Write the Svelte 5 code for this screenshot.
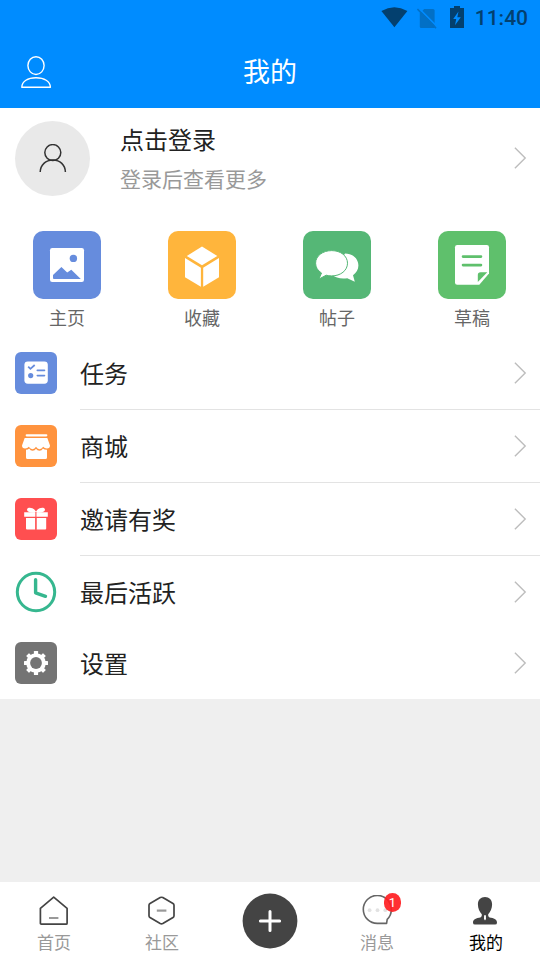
<script lang="ts">
	type Shortcut = { id: string; title: string; color: string };
	type Tab = { id: string; title: string; badge?: number };

	const shortcuts: Shortcut[] = [
		{ id: 'home', title: '主页', color: '#668cdd' },
		{ id: 'favorite', title: '收藏', color: '#ffb53c' },
		{ id: 'posts', title: '帖子', color: '#55b776' },
		{ id: 'draft', title: '草稿', color: '#5fc06c' }
	];

	const rows: Shortcut[] = [
		{ id: 'task', title: '任务', color: '#668cdd' },
		{ id: 'shop', title: '商城', color: '#ff933e' },
		{ id: 'invite', title: '邀请有奖', color: '#ff4f50' },
		{ id: 'active', title: '最后活跃', color: 'transparent' },
		{ id: 'settings', title: '设置', color: '#747474' }
	];

	const tabs: Tab[] = [
		{ id: 'index', title: '首页' },
		{ id: 'forum', title: '社区' },
		{ id: 'add', title: '' },
		{ id: 'message', title: '消息', badge: 1 },
		{ id: 'mine', title: '我的' }
	];

	const teeth = [0, 45, 90, 135, 180, 225, 270, 315];

	let current = $state('mine');
</script>

{#snippet arrow()}
	<svg class="arrow" width="14" height="24" viewBox="0 0 14 24">
		<path d="M1.9 1.8 12.2 12 1.9 22.2" fill="none" stroke="#bdbdbd" stroke-width="1.4" />
	</svg>
{/snippet}

<div class="page">
	<header>
		<div class="status-bar">
			<svg width="27" height="22" viewBox="0 0 27 22">
				<path d="M.4 4.9Q13.4-2.5 26.4 4.9L13.4 21.2Z" fill="#03406f" />
			</svg>
			<svg class="sim" width="20" height="22" viewBox="0 0 20 22">
				<path d="M7.2 1H16q1.6 0 1.6 1.6V20H4.2Q2.8 20 2.8 18.5V5.5Z" fill="#0270c6" />
				<path d="M1.2-.4 20.6 19" stroke="#008cff" stroke-width="1.6" />
				<path d="M.4 1.1 19 20.1" stroke="#0270c6" stroke-width="1.6" />
			</svg>
			<svg class="battery" width="14" height="22" viewBox="0 0 14 22">
				<path d="M0 2h4V0h6v2h4v20H0z" fill="#03406f" />
				<path d="M8.5 5.4 3.2 13.1h3L5 19.2l5.8-8H7.3z" fill="#008cff" />
			</svg>
			<span class="time">11:40</span>
		</div>
		<div class="title-bar">
			<svg width="32" height="33" viewBox="0 0 32 33" fill="none" stroke="#fff" stroke-width="1.4">
				<ellipse cx="16" cy="9.6" rx="8.1" ry="8.9" />
				<path d="M1.8 31.2H30.4C30.2 25.2 24.2 21.8 16 21.8S2 25.2 1.8 31.2Z" stroke-linejoin="round" />
			</svg>
			<h1>我的</h1>
		</div>
	</header>

	<main>
		<section class="profile">
			<div class="avatar">
				<svg width="30" height="30" viewBox="0 0 30 30" fill="none" stroke="#333" stroke-width="1.5">
					<circle cx="14.8" cy="8.6" r="8" />
					<path d="M2.2 28C2.4 21 7.7 16 14.9 16S27.2 21 27.4 28" />
				</svg>
			</div>
			<div class="profile-text">
				<div class="login">点击登录</div>
				<div class="hint">登录后查看更多</div>
			</div>
			{@render arrow()}
		</section>

		<section class="shortcuts">
			{#each shortcuts as item}
				<div class="shortcut">
					<div class="tile" style="background-color: {item.color}">
						<svg width="68" height="68" viewBox="0 0 68 68" fill="#fff">
							{#if item.id === 'home'}
								<rect x="17" y="17" width="34" height="34" rx="2.2" />
								<circle cx="40.4" cy="27.4" r="3.7" fill={item.color} />
								<path d="M20 47.3V44L28.4 35.9 34.2 41.6 38.3 38.8 47.8 47.9H20.6Z" fill={item.color} />
							{:else if item.id === 'favorite'}
								<path d="M34 15.6 49.3 25 34 34.3 18.8 25Z" />
								<path d="M17 27 32.9 36.7V55.8L17 46.3Z" />
								<path d="M51 27 35.2 36.7V55.8L51 46.3Z" />
							{:else if item.id === 'posts'}
								<path d="M42 22.4C50 22.5 55.4 27.8 55.4 34.6 55.4 38.6 53.2 42 50 44.2L51.8 50.8 44.3 47.2C38 48.2 32.5 46.8 29.5 44Z" />
								<path
									d="M28.7 19.6C37.8 19.6 44.5 25 44.5 32.2S37.8 44.9 28.7 44.9C26.7 44.9 24.9 44.7 23.2 44.2L15.9 48.1 18.5 42C14.8 39.7 12.6 36.3 12.6 32.2 12.6 25 19.6 19.6 28.7 19.6Z"
									stroke={item.color}
									stroke-width="1"
								/>
							{:else}
								<path d="M19.2 14H48.8Q51 14 51 16.2V42.5L41.3 53.8H19.2Q17 53.8 17 51.6V16.2Q17 14 19.2 14Z" />
								<path d="M25 25.6H43M25 34.1H43" stroke={item.color} stroke-width="2.6" stroke-linecap="round" />
								<path d="M39.8 51V44Q39.8 41.2 42.6 41.2H49.3Z" fill={item.color} />
							{/if}
						</svg>
					</div>
					<span>{item.title}</span>
				</div>
			{/each}
		</section>

		<section class="list">
			{#each rows as row}
				<div class="row">
					<div class="row-icon" style="background-color: {row.color}">
						<svg width="42" height="42" viewBox="0 0 42 42" fill="#fff">
							{#if row.id === 'task'}
								<rect x="9.4" y="9.4" width="23.4" height="22.3" rx="3.4" />
								<path d="M13.2 14.6 15.4 16.8 19.7 13" fill="none" stroke={row.color} stroke-width="1.8" />
								<circle cx="15.7" cy="23.6" r="2.6" fill={row.color} />
								<path d="M22.3 18.4H29.5M22.3 23.6H29.5" stroke={row.color} stroke-width="1.6" stroke-linecap="round" />
							{:else if row.id === 'shop'}
								<path d="M11.7 10.3H31.3" stroke="#fff" stroke-width="2.2" stroke-linecap="round" />
								<path
									d="M9.7 13H32.3L35 20.5Q35 23.4 31.9 23.4 29.5 23.4 28.2 21.8 26.7 24.2 24.5 24.2T21 21.8Q19.7 24.2 17.5 24.2T13.8 21.8Q12.5 23.4 10.1 23.4 7 23.4 7 20.5Z"
								/>
								<path d="M11 24.8Q13 24.7 14.2 23.4 15.4 25.7 17.6 25.7T21 23.7Q22.2 25.7 24.5 25.7T27.9 23.4Q29.3 24.8 32 24.8V32.5Q32 34 30.5 34H12.5Q11 34 11 32.5Z" />
							{:else if row.id === 'invite'}
								<path d="M9.2 14.2H32.8V18.7H9.2ZM11 20H20.3V31.5H12Q11 31.5 11 30.5ZM21.5 20H31.2V30.5Q31.2 31.5 30.2 31.5H21.5Z" />
								<path d="M21 14.5C15 15.2 11.4 13.8 12.1 11.2 13 8.5 19 9.5 21 13.7 23 9.5 29 8.5 29.9 11.2 30.6 13.8 27 15.2 21 14.5Z" />
								<path d="M20.9 14V31.5" stroke={row.color} stroke-width="1.1" />
							{:else if row.id === 'active'}
								<circle cx="21" cy="21" r="18.7" fill="none" stroke="#36b78f" stroke-width="3" />
								<path d="M20.6 8.7V21.8L30.5 25.3" fill="none" stroke="#36b78f" stroke-width="3.4" stroke-linecap="round" stroke-linejoin="round" />
							{:else}
								<circle cx="21" cy="21" r="9.8" />
								{#each teeth as angle}
									<rect x="18.9" y="9" width="4.2" height="5" rx=".5" transform="rotate({angle} 21 21)" />
								{/each}
								<circle cx="21" cy="21" r="5.9" fill={row.color} />
							{/if}
						</svg>
					</div>
					<div class="row-body">
						<span>{row.title}</span>
						{@render arrow()}
					</div>
				</div>
			{/each}
		</section>
	</main>

	<nav>
		{#each tabs as tab}
			<button class="tab {tab.id}" class:current={current === tab.id} onclick={() => (current = tab.id)}>
				{#if tab.id === 'add'}
					<svg width="56" height="56" viewBox="0 0 56 56">
						<circle cx="28" cy="28" r="27.4" fill="#444" />
						<path d="M28 18.4V37.6M18.4 28H37.6" stroke="#fff" stroke-width="3" stroke-linecap="round" />
					</svg>
				{:else}
					<span class="tab-icon">
						<svg width="32" height="32" viewBox="0 0 32 32" fill="none" stroke="#444" stroke-width="1.7" stroke-linejoin="round">
							{#if tab.id === 'index'}
								<path d="M15.7 2.2 29.1 13.3V28.2Q29.1 29.2 28.1 29.2H3.4Q2.4 29.2 2.4 28.2V13.3Z" />
								<path d="M11 23H20.4" stroke="#999" stroke-width="2" />
							{:else if tab.id === 'forum'}
								<path d="M14.2 2.6Q15.5 1.9 16.8 2.6L27 8.4Q28 9 28 10.2V20.8Q28 22 27 22.6L16.8 28.6Q15.5 29.3 14.2 28.6L4 22.6Q3 22 3 20.8V10.2Q3 9 4 8.4Z" />
								<path d="M10.8 15.6H20.4" stroke="#999" stroke-width="2.2" />
							{:else if tab.id === 'message'}
								<path d="M25.6 28.4H16.5A14 14 0 1 1 30.3 14.6Q30.3 20.7 26.2 24.4Z" stroke="#666" stroke-width="1.6" />
								<g fill="#e2e2e2" stroke="none">
									<circle cx="8.6" cy="15.2" r="1.9" />
									<circle cx="16.5" cy="15.2" r="1.9" />
									<circle cx="24.3" cy="15.2" r="1.9" />
								</g>
							{:else}
								<path
									d="M15 2C19.3 2 22.1 5 22.1 9.3 22.1 13.5 20.4 17 18.2 19.2 18 21.5 18.8 22.3 21 22.8 25.2 23.6 27 25 27 27.7Q27 29.6 25 29.6H5Q3 29.6 3 27.7C3 25 4.8 23.6 9 22.8 11.2 22.3 12 21.5 11.8 19.2 9.6 17 7.9 13.5 7.9 9.3 7.9 5 10.7 2 15 2Z"
									fill="#444"
									stroke="none"
								/>
								<path d="M14.1 20.2H15.9L16 24 15 25.5 14 24Z" fill="#fff" stroke="none" />
							{/if}
						</svg>
						{#if tab.badge}
							<span class="badge">{tab.badge}</span>
						{/if}
					</span>
					<span class="tab-title">{tab.title}</span>
				{/if}
			</button>
		{/each}
	</nav>
</div>

<style>
	:global(body) {
		background-color: #efefef;
	}
	.page {
		display: flex;
		flex-direction: column;
		height: 960px;
		font-family: 'Noto Sans CJK SC', sans-serif;
		color: #222;
	}
	svg {
		display: block;
		flex: none;
	}
	header {
		height: 108px;
		background-color: #008cff;
	}
	.status-bar {
		display: flex;
		align-items: flex-start;
		justify-content: flex-end;
		height: 36px;
		padding: 6px 12px 0 0;
		box-sizing: border-box;
	}
	.sim {
		margin: 2px 0 0 9px;
	}
	.battery {
		margin-left: 13px;
	}
	.time {
		margin-left: 11px;
		font: 500 21px/25px Roboto, sans-serif;
		color: #03406f;
	}
	.title-bar {
		display: grid;
		grid-template-columns: 32px 1fr 32px;
		align-items: center;
		height: 72px;
		padding: 0 20px;
	}
	h1 {
		margin: 0 0 2px;
		font-size: 27px;
		font-weight: 400;
		line-height: 40px;
		text-align: center;
		color: #fff;
	}
	main {
		background-color: #fff;
	}
	.arrow {
		margin-bottom: 1px;
	}
	.profile {
		display: flex;
		align-items: center;
		height: 101px;
		padding: 0 13px 0 15px;
	}
	.avatar {
		display: flex;
		align-items: center;
		justify-content: center;
		width: 75px;
		height: 75px;
		border-radius: 50%;
		background-color: #e9e9e9;
	}
	.profile-text {
		flex: 1;
		margin: 0 0 2px 30px;
	}
	.login {
		font-size: 24px;
		line-height: 40px;
	}
	.hint {
		font-size: 21px;
		line-height: 38px;
		color: #999;
	}
	.shortcuts {
		display: flex;
		justify-content: space-between;
		height: 106px;
		padding: 22px 34px 0 33px;
	}
	.shortcut {
		display: flex;
		flex-direction: column;
		align-items: center;
		font-size: 18px;
		line-height: 36px;
		color: #666;
	}
	.tile {
		border-radius: 10px;
	}
	.row {
		display: flex;
		align-items: center;
		height: 73px;
		padding-left: 15px;
	}
	.row-icon {
		margin-bottom: 1px;
		border-radius: 6px;
	}
	.row-body {
		display: flex;
		flex: 1;
		align-items: center;
		justify-content: space-between;
		height: 100%;
		margin-left: 23px;
		padding-right: 13px;
		box-sizing: border-box;
		border-bottom: 1px solid #e3e3e3;
		font-size: 24px;
	}
	.row-body span {
		margin-bottom: 2px;
	}
	.row:nth-last-child(-n + 2) {
		height: 72px;
	}
	.row:last-child {
		height: 71px;
	}
	.row:nth-last-child(-n + 2) .row-body {
		border-bottom: none;
	}
	nav {
		display: grid;
		grid-template-columns: repeat(5, 1fr);
		height: 78px;
		margin-top: auto;
		background-color: #fff;
	}
	.tab {
		display: flex;
		flex-direction: column;
		align-items: center;
		padding: 13px 0 0;
		border: none;
		background: transparent;
		font-family: inherit;
		color: #999;
	}
	.tab.add {
		padding-top: 11px;
	}
	.tab.message {
		padding-right: 2px;
	}
	.tab-icon {
		position: relative;
	}
	.tab-title {
		font-size: 17px;
		line-height: 30px;
	}
	.tab.current {
		color: #000;
	}
	.badge {
		position: absolute;
		top: -2px;
		left: 23px;
		width: 17px;
		height: 19px;
		border-radius: 9px;
		background-color: rgba(255, 30, 34, 0.92);
		font: 13px/20px Roboto, sans-serif;
		text-align: center;
		color: #fff;
	}
</style>
